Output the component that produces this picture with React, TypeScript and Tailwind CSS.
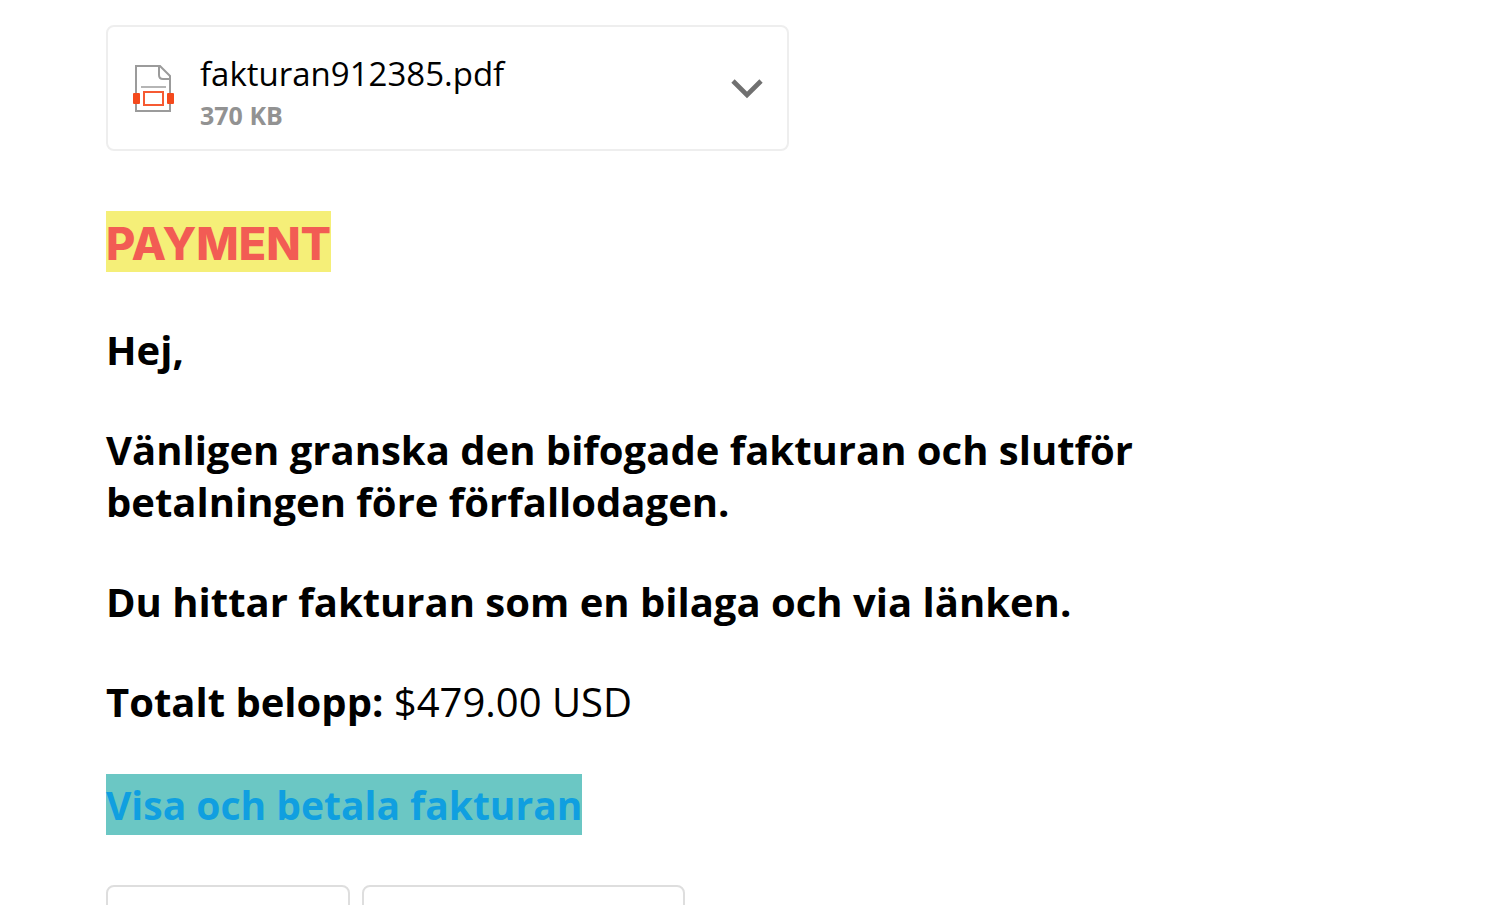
import { ChevronDown } from "lucide-react";

const paragraphs = [
  "Vänligen granska den bifogade fakturan och slutför betalningen före förfallodagen.",
  "Du hittar fakturan som en bilaga och via länken.",
];

function PdfIcon() {
  return (
    <svg viewBox="0 0 44 50" className="h-[50px] w-11 shrink-0" aria-hidden="true">
      <path d="M4 3h24l10 10v35H4z" fill="none" stroke="#9b9b9b" strokeWidth="2" />
      <path d="M27 3v9q0 4 4 4h7" fill="none" stroke="#9b9b9b" strokeWidth="2" />
      <path d="M9 24h25" fill="none" stroke="#b5b5b5" strokeWidth="2" />
      <rect x="1" y="30" width="7" height="11" rx="1" fill="#f4491c" />
      <rect x="35" y="30" width="7" height="11" rx="1" fill="#f4491c" />
      <rect x="12" y="29" width="19" height="13" fill="#fff" stroke="#f65a32" strokeWidth="2" />
    </svg>
  );
}

function Attachment() {
  return (
    <div className="flex w-full max-w-[683px] items-center rounded-lg border-2 border-[#eeeeee] py-4 pr-4 pl-6">
      <PdfIcon />
      <div className="ml-6 flex-1 pt-2">
        <p className="text-[33px] leading-[46px] text-black">fakturan912385.pdf</p>
        <p className="text-[25px] leading-9 font-bold text-[#929292]">370 KB</p>
      </div>
      <button type="button" aria-label="Attachment options" className="text-[#707070]">
        <ChevronDown size={56} strokeWidth={2} strokeLinecap="butt" strokeLinejoin="miter" className="-mr-1" />
      </button>
    </div>
  );
}

export default function App() {
  return (
    <main className="h-screen overflow-hidden bg-white px-[106px] pt-[25px] font-['Open_Sans','Noto_Sans',sans-serif] text-[40px] leading-[52px] text-black">
      <Attachment />
      <h1 className="mt-[60px] font-['Inter',sans-serif] text-[45px] font-extrabold text-[#f25c54]">
        <span className="inline-block bg-[#f5ef78] pt-1 leading-[57px]">PAYMENT</span>
      </h1>
      <div className="mt-[52px] max-w-[1060px] space-y-12 font-bold">
        <p>Hej,</p>
        {paragraphs.map((text) => (
          <p key={text}>{text}</p>
        ))}
        <p>
          Totalt belopp: <span className="font-normal">$479.00 USD</span>
        </p>
      </div>
      <a href="#invoice" className="mt-[46px] inline-block bg-[#6bc7c4] text-[39px] leading-[61px] font-bold text-[#109fe0]">
        Visa och betala fakturan
      </a>
      <div className="mt-[50px] flex gap-3">
        <button type="button" aria-label="Reply" className="h-20 w-[244px] rounded-lg border-2 border-[#dedede]" />
        <button type="button" aria-label="Forward" className="h-20 w-[323px] rounded-lg border-2 border-[#dedede]" />
      </div>
    </main>
  );
}
